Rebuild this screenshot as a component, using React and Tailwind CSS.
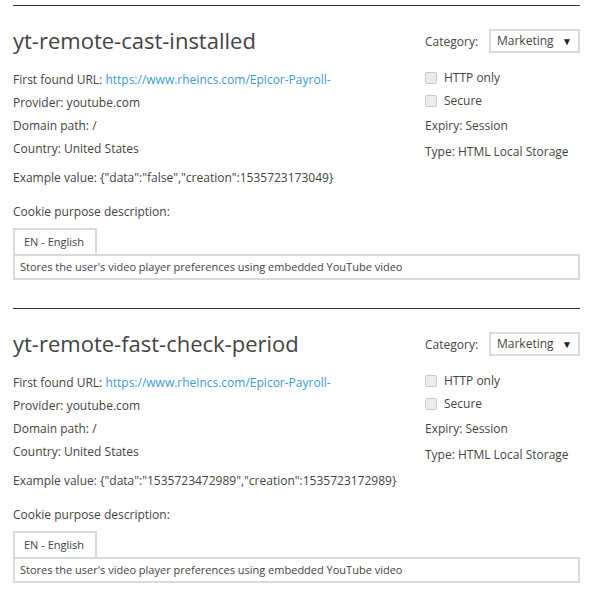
import React from 'react';

const cookies = [
    {
        name: 'yt-remote-cast-installed',
        example: '{"data":"false","creation":1535723173049}',
    },
    {
        name: 'yt-remote-fast-check-period',
        example: '{"data":"1535723472989","creation":1535723172989}',
    },
];

const CookieCard = ({ cookie }) => (
    <div className="border-t border-[#333] h-[303px]">
        <div className="flex">
            {/* Left column */}
            <div className="flex-1">
                <h2 className="text-[22px] leading-[30px] text-[#444] mt-[19px] mb-[13px]">{cookie.name}</h2>
                <div className="leading-[23px]">
                    <p>First found URL: <a className="text-[#3b9ad9]">https://www.rheincs.com/Epicor-Payroll-</a></p>
                    <p>Provider: youtube.com</p>
                    <p>Domain path: /</p>
                    <p>Country: United States</p>
                </div>
                <p className="mt-[6px] leading-[23px]">Example value: {cookie.example}</p>
            </div>

            {/* Right column */}
            <div className="w-[155px] pt-[23px]">
                <div className="flex items-center h-[24px]">
                    <span className="w-[64px] relative top-[1px]">Category:</span>
                    <div className="flex-1 h-[24px] border-2 border-[#d9d9d9] flex items-center justify-between pl-[6px] pr-[6px]">
                        <span>Marketing</span>
                        <span className="text-[10px] text-[#222]">▼</span>
                    </div>
                </div>
                <div className="mt-[13px] leading-[23px]">
                    <label className="flex items-center">
                        <span className="w-[12px] h-[12px] rounded-[2px] border border-[#c8c8c8] bg-[#ececec] mr-[7px]"></span>
                        HTTP only
                    </label>
                    <label className="flex items-center">
                        <span className="w-[12px] h-[12px] rounded-[2px] border border-[#c8c8c8] bg-[#ececec] mr-[7px]"></span>
                        Secure
                    </label>
                    <p className="mt-[2px]">Expiry: Session</p>
                    <p className="mt-[3px] whitespace-nowrap">Type: HTML Local Storage</p>
                </div>
            </div>
        </div>

        <p className="mt-[11px] leading-[23px]">Cookie purpose description:</p>
        <div className="mt-[5px]">
            <div className="inline-block border-2 border-b-0 border-[#d9d9d9] pl-[9px] pr-[11px] h-[26px] leading-[24px] text-[11px]">EN - English</div>
            <div className="border-2 border-[#d9d9d9] h-[26px] leading-[22px] px-[5px] text-[11px]">
                Stores the user's video player preferences using embedded YouTube video
            </div>
        </div>
    </div>
);

const App = () => (
    <div className="bg-white min-h-[603px] pl-[13px] pt-[5px] text-[12px] text-[#444]" style={{ fontFamily: '"Open Sans", sans-serif' }}>
        <div className="w-[567px]">
            {cookies.map(c => (
                <CookieCard key={c.name} cookie={c} />
            ))}
        </div>
    </div>
);

export default App;
